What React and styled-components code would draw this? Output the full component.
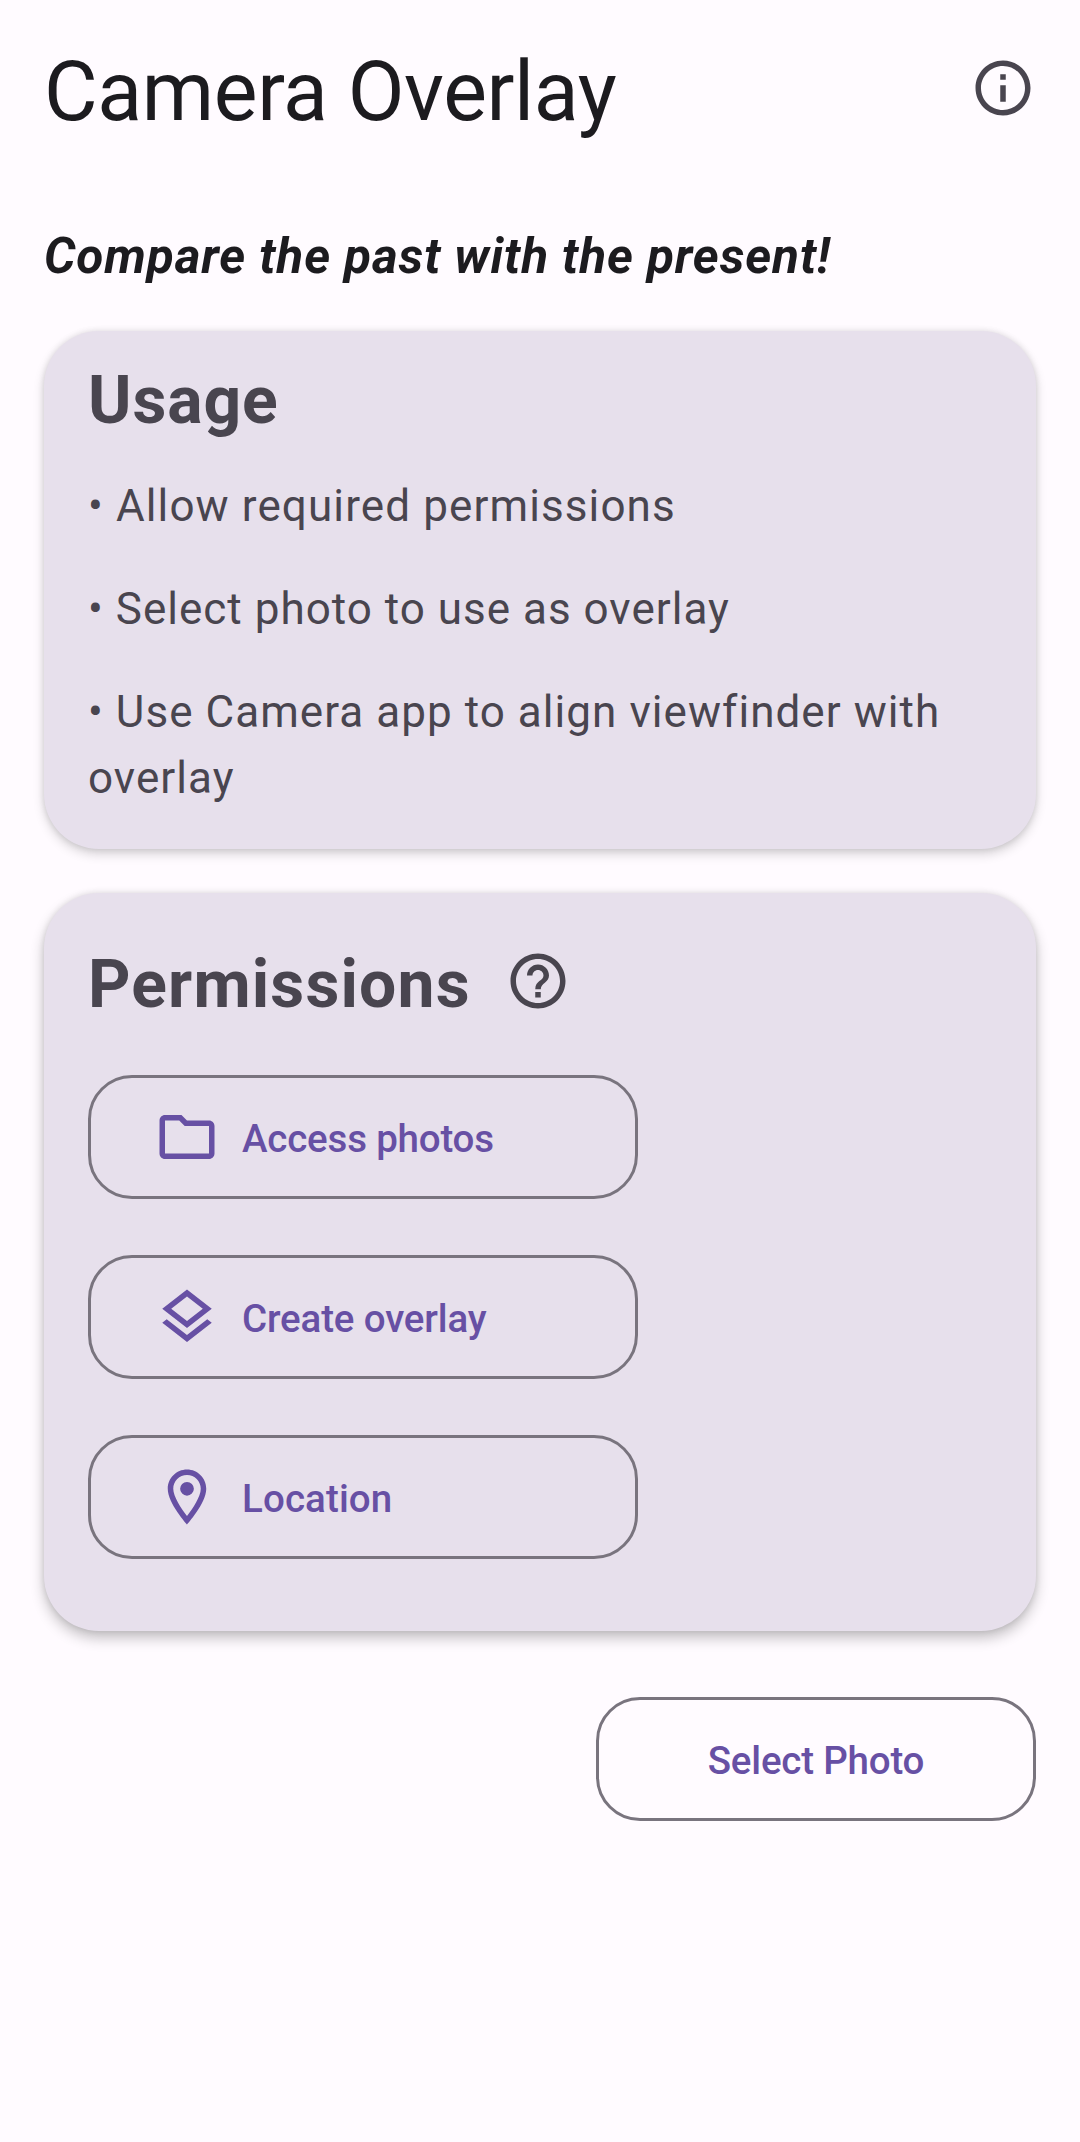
import React from 'react';
import styled, { createGlobalStyle } from 'styled-components';

const GlobalStyle = createGlobalStyle`
  * { box-sizing: border-box; }
  body {
    margin: 0;
    background: #fffbff;
    font-family: Roboto, "Liberation Sans", sans-serif;
  }
`;

const Screen = styled.main`
  display: flex;
  flex-direction: column;
  width: 1080px;
  height: 2142px;
  padding: 44px 44px 0;
  background: #fffbff;
`;

const Header = styled.header`
  display: flex;
  align-items: center;
  justify-content: space-between;
  height: 88px;
`;

const Title = styled.h1`
  margin: 7px 0 0;
  font-size: 82.5px;
  line-height: 96px;
  font-weight: 400;
  letter-spacing: -0.38px;
  color: #1c1b1f;
`;

const Tagline = styled.p`
  margin: 91px 0 0;
  font-size: 49.5px;
  line-height: 66px;
  font-weight: 700;
  font-style: italic;
  letter-spacing: 0.9px;
  white-space: nowrap;
  color: #1c1b1f;
`;

const Card = styled.section`
  height: ${(p) => p.$height}px;
  margin-top: ${(p) => p.$top}px;
  padding: ${(p) => p.$padTop}px 44px 0;
  border-radius: 55px;
  background: #e7e0ec;
  box-shadow: ${(p) => p.$shadow};
`;

const Heading = styled.h2`
  margin: 0;
  font-size: 66px;
  line-height: 88px;
  font-weight: 700;
  letter-spacing: ${(p) => p.$tracking}px;
  color: #49454f;
`;

const Steps = styled.div`
  display: flex;
  flex-direction: column;
  gap: 37px;
  margin-top: 28px;
`;

const Step = styled.p`
  margin: 0;
  font-size: 44px;
  line-height: 66px;
  letter-spacing: ${(p) => p.$tracking}px;
  color: #49454f;
`;

const HeadingRow = styled.div`
  display: flex;
  align-items: flex-start;
  gap: 34px;
  height: 88px;

  svg { margin-top: 6.5px; }
`;

const PermissionList = styled.div`
  display: flex;
  flex-direction: column;
  gap: 56px;
  margin-top: 46px;
`;

const OutlinedButton = styled.button`
  display: flex;
  align-items: center;
  justify-content: ${(p) => (p.$centered ? 'center' : 'flex-start')};
  align-self: ${(p) => (p.$centered ? 'flex-end' : 'flex-start')};
  gap: 22px;
  width: ${(p) => p.$width}px;
  height: 124px;
  margin: ${(p) => (p.$centered ? '66px 0 0' : '0')};
  padding: 0 63px;
  border: 3px solid #79747e;
  border-radius: 44px;
  background: transparent;
  color: #6750a4;
  font-family: inherit;
`;

const Label = styled.span`
  padding-top: 3px;
  font-size: 38.5px;
  line-height: 55px;
  font-weight: 500;
  letter-spacing: ${(p) => p.$tracking}px;
  white-space: nowrap;
`;

const Glyph = styled.svg`
  flex: none;
  display: block;
  width: 66px;
  height: 66px;
  fill: ${(p) => p.$color || 'currentColor'};
`;

const ICONS = {
  info: 'M11 7h2v2h-2zm0 4h2v6h-2zm1-9C6.48 2 2 6.48 2 12s4.48 10 10 10 10-4.48 10-10S17.52 2 12 2zm0 18c-4.41 0-8-3.59-8-8s3.59-8 8-8 8 3.59 8 8-3.59 8-8 8z',
  help: 'M11 18h2v-2h-2v2zm1-16C6.48 2 2 6.48 2 12s4.48 10 10 10 10-4.48 10-10S17.52 2 12 2zm0 18c-4.41 0-8-3.59-8-8s3.59-8 8-8 8 3.59 8 8-3.59 8-8 8zm0-14c-2.21 0-4 1.79-4 4h2c0-1.1.9-2 2-2s2 .9 2 2c0 2-3 1.75-3 5h2c0-2.25 3-2.5 3-5 0-2.21-1.79-4-4-4z',
  folder: 'M9.17 6l2 2H20v10H4V6h5.17M10 4H4c-1.1 0-1.99.9-1.99 2L2 18c0 1.1.9 2 2 2h16c1.1 0 2-.9 2-2V8c0-1.1-.9-2-2-2h-8l-2-2z',
  layers: 'M11.99 18.54l-7.37-5.73L3 14.07l9 7 9-7-1.63-1.27zM12 16l7.36-5.73L21 9l-9-7-9 7 1.63 1.27L12 16zm0-11.47L17.74 9 12 13.47 6.26 9 12 4.53z',
  place: 'M12 2C8.13 2 5 5.13 5 9c0 5.25 7 13 7 13s7-7.75 7-13c0-3.87-3.13-7-7-7zM7 9c0-2.76 2.24-5 5-5s5 2.24 5 5c0 2.88-2.88 7.19-5 9.88C9.92 16.21 7 11.85 7 9zM12 6.5a2.5 2.5 0 1 0 0 5 2.5 2.5 0 1 0 0-5z',
};

function Icon({ name, color }) {
  return (
    <Glyph viewBox="0 0 24 24" $color={color} aria-hidden="true">
      <path d={ICONS[name]} />
    </Glyph>
  );
}

const STEPS = [
  { text: 'Allow required permissions', tracking: 1.11 },
  { text: 'Select photo to use as overlay', tracking: 1.01 },
  { text: 'Use Camera app to align viewfinder with overlay', tracking: 1.05 },
];

const PERMISSIONS = [
  { icon: 'folder', label: 'Access photos', tracking: -0.2 },
  { icon: 'layers', label: 'Create overlay', tracking: -0.15 },
  { icon: 'place', label: 'Location', tracking: 0.12 },
];

export default function App() {
  return (
    <>
      <GlobalStyle />
      <Screen>
        <Header>
          <Title>Camera Overlay</Title>
          <Icon name="info" color="#49454f" />
        </Header>
        <Tagline>Compare the past with the present!</Tagline>
        <Card
          $height={518}
          $top={42}
          $padTop={26}
          $shadow="0 5px 11px rgba(0,0,0,0.17), 0 0 6px rgba(0,0,0,0.1)"
        >
          <Heading $tracking={0.9}>Usage</Heading>
          <Steps>
            {STEPS.map((s) => (
              <Step key={s.text} $tracking={s.tracking}>{`• ${s.text}`}</Step>
            ))}
          </Steps>
        </Card>
        <Card
          $height={738}
          $top={44}
          $padTop={48}
          $shadow="0 7px 14px rgba(0,0,0,0.24), 0 0 6px rgba(0,0,0,0.1)"
        >
          <HeadingRow>
            <Heading $tracking={1.16}>Permissions</Heading>
            <Icon name="help" color="#49454f" />
          </HeadingRow>
          <PermissionList>
            {PERMISSIONS.map((p) => (
              <OutlinedButton key={p.label} $width={550}>
                <Icon name={p.icon} />
                <Label $tracking={p.tracking}>{p.label}</Label>
              </OutlinedButton>
            ))}
          </PermissionList>
        </Card>
        <OutlinedButton $width={440} $centered>
          <Label $tracking={-0.2}>Select Photo</Label>
        </OutlinedButton>
      </Screen>
    </>
  );
}
